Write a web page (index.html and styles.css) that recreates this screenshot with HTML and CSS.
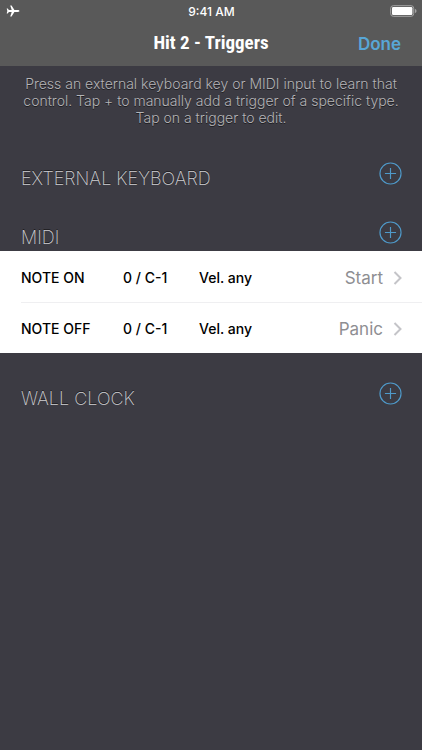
FILE: index.html
```html
<!DOCTYPE html>
<html lang="en">
<head>
<meta charset="utf-8">
<meta name="viewport" content="width=device-width, initial-scale=1">
<title>Hit 2 - Triggers</title>
<link rel="stylesheet" href="styles.css">
</head>
<body>
<header class="top">
  <div class="status">
    <svg class="plane" viewBox="0 0 14 12" width="14" height="12" aria-hidden="true"><path d="M13.4 6c0 .6-.7.9-1.5.9H8.400L5.600 11.500H4.200L5.700 6.900H2.900L1.700 8.500H.7L1.300 6 .7 3.500h1l1.200 1.600h2.800L4.200.5h1.400l2.800 4.600h3.500c.8 0 1.500.3 1.500.9z"/></svg>
    <span class="time">9:41 AM</span>
    <svg class="battery" viewBox="0 0 27 12" width="27" height="12" aria-hidden="true"><rect class="shell" x=".7" y=".7" width="23" height="10.600" rx="2.600"/><rect class="charge" x="2" y="2" width="20.400" height="8" rx="1.200"/><path class="cap" d="M24.900 4c1.100.3 1.600 1 1.600 2s-.5 1.700-1.600 2z"/></svg>
  </div>
  <div class="nav">
    <h1 class="title">Hit 2 - Triggers</h1>
    <button class="done" type="button">Done</button>
  </div>
</header>
<main>
  <p class="help">Press an external keyboard key or MIDI input to learn that control. Tap + to manually add a trigger of a specific type. Tap on a trigger to edit.</p>
  <section>
    <div class="head">
      <h2 class="name">EXTERNAL KEYBOARD</h2>
      <button class="add" type="button" aria-label="Add external keyboard trigger"><svg viewBox="0 0 24 24" width="23" height="23"><circle cx="12" cy="12" r="11"/><path d="M12 6.200v11.600M6.200 12h11.600"/></svg></button>
    </div>
  </section>
  <section>
    <div class="head">
      <h2 class="name">MIDI</h2>
      <button class="add" type="button" aria-label="Add MIDI trigger"><svg viewBox="0 0 24 24" width="23" height="23"><circle cx="12" cy="12" r="11"/><path d="M12 6.200v11.600M6.200 12h11.600"/></svg></button>
    </div>
    <ul class="list">
      <li><a class="row" href="#note-on"><span>NOTE ON</span><span>0 / C-1</span><span>Vel. any</span><span class="action">Start</span><svg class="chevron" viewBox="0 0 9 16" width="9" height="16" aria-hidden="true"><path d="M1.500 2 7.500 8 1.500 14"/></svg></a></li>
      <li><a class="row" href="#note-off"><span>NOTE OFF</span><span>0 / C-1</span><span>Vel. any</span><span class="action">Panic</span><svg class="chevron" viewBox="0 0 9 16" width="9" height="16" aria-hidden="true"><path d="M1.500 2 7.500 8 1.500 14"/></svg></a></li>
    </ul>
  </section>
  <section>
    <div class="head">
      <h2 class="name">WALL CLOCK</h2>
      <button class="add" type="button" aria-label="Add wall clock trigger"><svg viewBox="0 0 24 24" width="23" height="23"><circle cx="12" cy="12" r="11"/><path d="M12 6.200v11.600M6.200 12h11.600"/></svg></button>
    </div>
  </section>
</main>
</body>
</html>
```
FILE: styles.css
```css
* { box-sizing: border-box; }

body {
  margin: 0;
  min-height: 100vh;
  background: #3c3b43;
  color: #b4b4b7;
  font-family: Inter, "Liberation Sans", sans-serif;
}

h1, h2, p, ul { margin: 0; padding: 0; font-weight: inherit; }

button {
  padding: 0;
  border: 0;
  background: none;
  color: #58a6d6;
  font: inherit;
}

.top { background: #595959; color: #fff; }

.status, .nav {
  display: grid;
  grid-template-columns: 1fr auto 1fr;
  align-items: center;
}

.status { height: 22px; padding: 0 5px 0 6px; }
.plane { fill: #fff; }
.time { font-size: 12px; font-weight: 500; }
.battery { justify-self: end; }
.shell { fill: none; stroke: #a4a4a4; }
.charge { fill: #fff; }
.cap { fill: #a4a4a4; }

.nav { height: 44px; padding: 0 21px; }

.title {
  grid-column: 2;
  font-family: "Liberation Sans Narrow", "Roboto Condensed", "Liberation Sans", sans-serif;
  font-size: 19px;
  font-weight: 700;
  line-height: 22px;
  padding-bottom: 2px;
}

.done { justify-self: end; font-size: 17px; font-weight: 600; }

.help {
  padding: 9px 20px 7px;
  font-size: 14px;
  font-weight: 300;
  line-height: 17px;
  text-align: center;
  text-shadow: 0 1px 0 #1c1c20;
}

.head {
  display: flex;
  justify-content: space-between;
  padding: 29px 20px 2px 21px;
}

.name {
  padding-top: 6px;
  font-size: 18px;
  font-weight: 200;
  line-height: 22px;
  color: #ceced2;
  text-shadow: 0 -1px 0 #1c1c20;
}

.add { height: 23px; }
.add svg { display: block; fill: none; stroke: #4f9aca; stroke-width: 1.2; }

.list { background: #fff; list-style: none; }
.list li { padding-left: 21px; }

.row {
  display: grid;
  grid-template-columns: 102px 76px 1fr auto 9px;
  align-items: center;
  height: 51px;
  padding: 2px 20px 0 0;
  color: #000;
  font-size: 14px;
  font-weight: 500;
  text-decoration: none;
}

.list li + li .row { padding-top: 1px; border-top: 1px solid #efeff1; }
.action { margin-right: 10px; color: #8e8e92; font-size: 17px; font-weight: 400; }
.chevron { fill: none; stroke: #c4c4c8; stroke-width: 2; }
```
